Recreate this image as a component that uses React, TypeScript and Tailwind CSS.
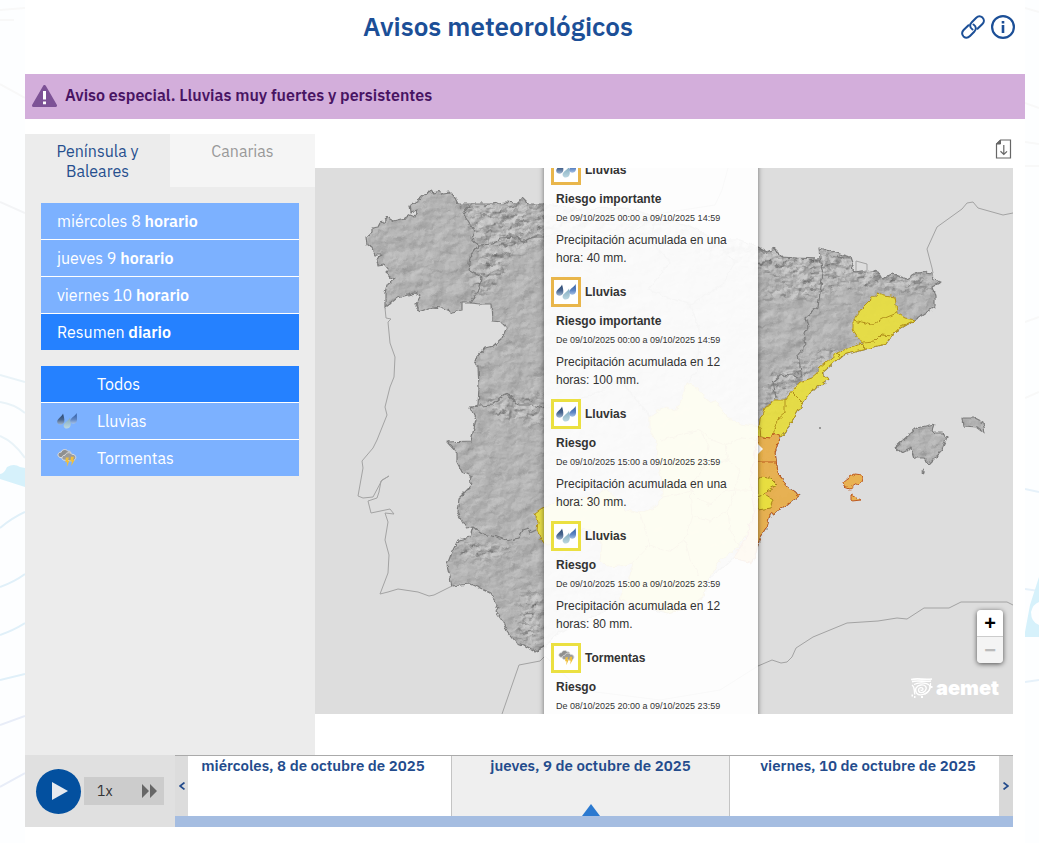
import React, { useState } from "react";
import clsx from "clsx";

const periods = [
  { label: "miércoles 8", kind: "horario" },
  { label: "jueves 9", kind: "horario" },
  { label: "viernes 10", kind: "horario" },
  { label: "Resumen", kind: "diario" },
];

const phenomena = ["Todos", "Lluvias", "Tormentas"];

const days = [
  "miércoles, 8 de octubre de 2025",
  "jueves, 9 de octubre de 2025",
  "viernes, 10 de octubre de 2025",
];

const warnings = [
  { type: "Lluvias", level: "Riesgo importante", dates: "De 09/10/2025 00:00 a 09/10/2025 14:59", text: "Precipitación acumulada en una hora: 40 mm." },
  { type: "Lluvias", level: "Riesgo importante", dates: "De 09/10/2025 00:00 a 09/10/2025 14:59", text: "Precipitación acumulada en 12 horas: 100 mm." },
  { type: "Lluvias", level: "Riesgo", dates: "De 09/10/2025 15:00 a 09/10/2025 23:59", text: "Precipitación acumulada en una hora: 30 mm." },
  { type: "Lluvias", level: "Riesgo", dates: "De 09/10/2025 15:00 a 09/10/2025 23:59", text: "Precipitación acumulada en 12 horas: 80 mm." },
  { type: "Tormentas", level: "Riesgo", dates: "De 08/10/2025 20:00 a 09/10/2025 23:59", text: "" },
];

function RainIcon({ className }: { className?: string }) {
  return (
    <svg viewBox="0 0 20 16" className={className} aria-hidden="true">
      <defs>
        <linearGradient id="dropDark" x1="0" y1="0" x2="0" y2="1">
          <stop offset="0" stopColor="#27456f" />
          <stop offset=".55" stopColor="#4a6790" />
          <stop offset="1" stopColor="#9fb5cf" />
        </linearGradient>
        <linearGradient id="dropPale" x1="0" y1="0" x2="0" y2="1">
          <stop offset="0" stopColor="#7fa9bd" />
          <stop offset="1" stopColor="#bcd8e2" />
        </linearGradient>
        <linearGradient id="dropBlue" x1="0" y1="0" x2="0" y2="1">
          <stop offset="0" stopColor="#2b58a0" />
          <stop offset=".6" stopColor="#5f86c4" />
          <stop offset="1" stopColor="#a4c0e6" />
        </linearGradient>
      </defs>
      <path d="M6 .5 C7 4 7.500 6 7.300 8.300 C7 12.500 .6 12.800 .2 9 C0 5.500 4.800 4 6 .5Z" fill="url(#dropDark)" />
      <path d="M13 4.500 C13.600 8 14 10 13.700 12 C13.200 16.500 6.800 16.800 6.600 12.800 C6.600 9.500 11.500 8 13 4.500Z" fill="url(#dropPale)" />
      <path d="M19.600 0 C20 4 20.200 5.500 19.900 7.500 C19.400 11.500 13.400 11.800 13.200 8 C13.200 4.800 18 3.500 19.600 0Z" fill="url(#dropBlue)" />
    </svg>
  );
}

function StormIcon({ className }: { className?: string }) {
  return (
    <svg viewBox="0 0 20 18" className={className} aria-hidden="true">
      <path d="M3 8.500 C-.5 7 1 2.800 4.200 3.200 C5 0 9.500 -.3 10.800 2.200 C13 1.600 14 3 13.800 4.500 L12 9 Z" fill="#8f8f8f" stroke="#dedede" />
      <path d="M6 11 C3.800 9.400 5.300 6 7.900 6.300 C9 3 13.600 3 14.800 5.300 C18 5 19.800 8 18.200 10.300 C17 12.300 14 11.800 12.500 11.800 Z" fill="#9c9c9c" stroke="#dedede" />
      <path d="M8.800 8.500 H11.800 L11 11.800 H12.400 L9.800 18 L10 13.300 H8.400Z" fill="#f0c03c" />
      <path d="M14 7.800 H16.900 L16.200 11 H17.600 L14.300 17 L14.900 12.500 H13.300Z" fill="#f0c03c" />
    </svg>
  );
}

const PENINSULA =
  "M544 204 L528 204 522 198 518 203 505 202 492 204 458 204 455 198 450 193 443 194 438 191 433 193 431 191 425 195 418 200 410 205 411 212 417 210 415 217 410 215 405 218 393 221 387 217 384 222 380 223 378 227 372 228 372 232 366 237 367 245 372 248 375 255 382 255 377 260 378 266 384 265 388 270 385 273 390 277 395 279 387 285 385 293 385 308 397 298 415 293 421 296 416 305 419 312 432 307 443 308 452 312 462 310 462 303 470 303 480 304 491 304 492 321 502 322 507 327 502 338 493 346 485 348 474 360 478 367 479 387 478 405 470 408 476 420 471 441 447 442 457 453 457 462 462 472 472 477 470 487 459 498 457 513 466 528 473 527 470 537 458 540 452 552 447 565 450 577 452 586 470 584 490 593 499 608 496 612 503 622 507 632 515 642 523 645 535 652 544 647 560 632 590 618 620 604 645 608 667 613 690 608 703 597 707 580 723 567 733 558 753 563 759 540 767 527 770 515 785 507 800 495 788 487 778 473 775 452 780 437 790 425 803 403 812 390 818 387 829 379 822 373 843 355 886 344 893 333 915 320 935 307 935 297 932 287 941 282 933 280 932 273 925 272 917 273 907 279 893 274 882 279 878 272 867 270 855 272 850 257 833 252 819 248 820 259 797 258 783 257 775 249 767 252 758 247 740 240 715 240 690 226 650 215 627 208 585 209Z";

const BALEARES =
  "M895 447 L917 428 934 424 932 430 935 433 942 433 947 437 945 442 940 453 929 464 923 458 915 458 912 448 902 453Z M962 418 L975 418 983 422 985 433 977 427 963 426Z M922 472 L924 469 924 473Z";

// mountain ranges, drawn over the base relief with more contrast
const RANGES =
  "M455 200 L550 200 750 235 850 252 935 275 930 295 880 292 830 285 760 275 650 235 545 240 515 258 485 300 470 290 480 245 Z M478 400 L545 390 545 425 500 420 Z M525 590 L545 585 545 655 512 640 Z M758 290 L800 280 845 290 820 300 758 300Z M770 375 L830 345 850 350 815 375 775 420 758 420 Z M458 538 L520 545 500 560 455 560 Z";

const BORDERS = [
  "M470 205 L463 213 472 227 475 232 472 238 479 246 470 257 468 270 482 278 480 288 470 303",
  "M478 245 L493 244 500 238 517 237 523 242 532 237 543 237 570 232 600 240 640 228 655 214",
  "M470 407 L492 405 507 393 518 405 532 405 543 408 590 396 620 380 650 417",
  "M473 527 L483 534 497 537 508 541 518 538 522 530 528 528 530 533 536 530",
  "M820 259 L823 273 818 307 805 318 808 327 804 333 806 345 798 355 802 377 781 375 773 382 776 398",
  "M655 214 L650 240 670 262 648 290 690 305 722 285 735 262 715 240",
  "M690 305 L700 330 697 370 687 383",
];

const YELLOW_AREAS = [
  "M878 293 L884 295 895 297 897 313 905 318 915 320 893 333 886 344 866 349 862 343 853 330 853 320 862 308 870 300Z",
  "M758 435 L760 420 765 408 775 400 785 400 793 390 800 382 812 378 818 373 820 367 837 353 860 343 866 349 843 355 822 373 829 379 818 387 812 390 803 403 790 425 780 437 774 434 769 438Z",
  "M687 383 L694 386 703 393 708 402 715 400 722 410 727 417 740 424 760 427 764 480 760 510 748 530 738 548 720 560 707 580 703 597 690 608 667 613 655 608 640 607 620 600 623 590 630 575 633 563 620 566 607 567 600 560 602 545 593 530 580 528 565 540 548 545 542 542 537 530 538 522 535 513 543 507 558 502 573 500 590 498 607 490 618 500 626 510 640 513 654 508 662 497 662 480 657 463 658 445 650 430 650 417 658 411 667 407 676 412 682 398Z",
];

const YELLOW_LINES =
  "M853 320 L862 322 872 325 885 318 897 313 M863 343 L874 342 882 334 893 335 900 327 915 320 M785 400 L785 413 777 420 773 435 M793 393 L803 403 M837 353 L841 357 M660 440 L678 436 700 430 712 440 725 445 742 438 760 440 M662 497 L676 495 690 490 700 500 710 505 722 492 735 490 750 490 762 495 M640 513 L645 530 650 545 633 563 M690 490 L692 515 685 540 690 560 700 575 M735 490 L728 510 730 530 745 555 M700 430 L708 445 705 465 690 490 M725 445 L728 460 740 470 735 490 M650 545 L668 552 685 540 M692 515 L710 522 728 510 M705 465 L728 460";

const ORANGE_AREAS = [
  "M758 436 L769 438 774 434 780 437 775 452 778 473 788 487 800 495 785 507 770 515 767 527 759 540 753 563 733 558 745 540 755 510 750 480Z",
  "M855 474 L863 475 861 482 850 489 844 487 843 482 849 477Z",
  "M852 495 L861 500 852 501Z",
];

const COUNTRY_LINES = [
  "M385 308 L386 318 391 319 388 322 390 343 395 357 394 377 390 387 385 407 387 415 377 440 373 448 362 461 363 468 358 496 363 498 373 497 382 480 389 476 381 481 379 492 377 498 368 501 371 513 390 509 394 514 385 513 388 522 385 540 389 555 388 573 380 594 388 592 398 589 418 592 429 596 434 595 452 586",
  "M502 714 L519 665 540 661 545 656 580 690 660 700 720 690 758 666 772 660 781 663 787 662 792 657 796 648 813 637 847 623 878 621 897 618 907 619 924 608 949 608 961 602 1007 602 1013 605",
  "M933 273 L932 268 927 249 937 227 962 209 967 203 973 202 978 208 1003 215 1013 213",
  "M650 215 L715 205 722 190 728 168",
  "M856 272 L856 261 867 264 867 270",
];

function WarningMap() {
  return (
    <svg
      viewBox="315 168 698 546"
      preserveAspectRatio="xMidYMid slice"
      className="block h-full w-full"
      role="img"
      aria-label="Mapa de avisos"
    >
      <defs>
        {/* shaded terrain */}
        <filter id="relief" x="0" y="0" width="1" height="1" colorInterpolationFilters="sRGB">
          <feTurbulence type="fractalNoise" baseFrequency="0.05 0.07" numOctaves={4} seed={7} result="noise" />
          <feDiffuseLighting in="noise" surfaceScale={1.2} diffuseConstant={0.81} lightingColor="#ffffff" result="light">
            <feDistantLight azimuth={225} elevation={60} />
          </feDiffuseLighting>
          <feComposite in="light" in2="SourceGraphic" operator="in" />
        </filter>
        <filter id="ranges" x="0" y="0" width="1" height="1" colorInterpolationFilters="sRGB">
          <feTurbulence type="fractalNoise" baseFrequency="0.09 0.14" numOctaves={3} seed={11} result="noise" />
          <feDiffuseLighting in="noise" surfaceScale={2.2} diffuseConstant={0.82} lightingColor="#ffffff" result="light">
            <feDistantLight azimuth={225} elevation={60} />
          </feDiffuseLighting>
          <feGaussianBlur in="SourceAlpha" stdDeviation="6" result="mask" />
          <feComposite in="light" in2="mask" operator="in" />
        </filter>
        <clipPath id="land">
          <path d={PENINSULA} />
        </clipPath>
        {/* rough coastline */}
        <filter id="coast" x="-5%" y="-5%" width="110%" height="110%">
          <feTurbulence type="fractalNoise" baseFrequency="0.18" numOctaves={2} seed={3} result="n" />
          <feDisplacementMap in="SourceGraphic" in2="n" scale={5} xChannelSelector="R" yChannelSelector="G" />
        </filter>
      </defs>

      <rect x="315" y="168" width="698" height="546" fill="#dddddd" />
      <g fill="none" stroke="#a3a3a3" strokeLinejoin="round">
        {COUNTRY_LINES.map((d) => (
          <path key={d} d={d} />
        ))}
      </g>

      <g filter="url(#coast)" strokeLinejoin="round">
        <g filter="url(#relief)">
          <path d={PENINSULA} />
          <path d={BALEARES} />
        </g>
        <g clipPath="url(#land)">
          <path d={RANGES} filter="url(#ranges)" />
        </g>
        <g fill="none" stroke="#7c7c7c" strokeWidth="1.2">
          <path d={PENINSULA} />
          <path d={BALEARES} />
          {BORDERS.map((d) => (
            <path key={d} d={d} />
          ))}
        </g>
        <g fill="#e8de40" fillOpacity="0.94" stroke="#b3921c">
          {YELLOW_AREAS.map((d) => (
            <path key={d} d={d} />
          ))}
          <path d={YELLOW_LINES} fill="none" />
        </g>
        <g fill="#e9b04c" fillOpacity="0.95" stroke="#bd5a20">
          {ORANGE_AREAS.map((d) => (
            <path key={d} d={d} />
          ))}
          <path d="M758 462 L777 462" />
        </g>
        <path
          d="M758 477 L770 478 777 485 763 493 773 500 770 508 758 510Z M758 497 L764 495"
          fill="#e8de40"
          stroke="#a8851c"
        />
      </g>
      <circle cx="820" cy="428" r="1" fill="#808080" />
      <circle cx="767" cy="529" r="1" fill="#a0a0a0" />
      <path d="M757 443 L763 449 757 455Z" fill="#ffffff" />
    </svg>
  );
}

function AemetLogo() {
  return (
    <div className="pointer-events-none absolute right-[14px] bottom-4 flex items-center gap-[3px] text-white">
      <svg viewBox="0 0 22 20" className="h-5 w-[22px]" fill="none" stroke="currentColor" strokeWidth="1.300" aria-hidden="true">
        <path d="M0 1.500 C7 0 13 2 21 1 M1 3.600 C6 2 14 4 20 3" strokeWidth="1.700" />
        <path d="M3 6.500 C8 3.800 19 4.500 19 9 C19 15 9 19.500 5.500 15 C3 11.500 5.500 7.500 10 7 C15 6.500 16.500 10 14 13 C11.500 15.600 7.500 15 7.500 12 C7.500 9.500 11.500 8.800 12 11 C12 12.500 10 12.800 9.800 11.600" />
        <path d="M1 7 C4.500 9 2.500 13 4 16.500 M13.500 16.500 C17.500 14.500 20 11 19.500 5" />
        <path d="M.5 17.500 h1.500 M3 19 h1.500 M10 19 h2 M20 9 h1.500" strokeWidth="1.800" />
      </svg>
      <span className="font-['Inter'] text-xl leading-5 font-black">aemet</span>
    </div>
  );
}

function WarningPopup() {
  return (
    <div className="absolute -top-[13px] left-[229px] w-[214px] bg-white/93 pr-2 pl-[7px] font-['Liberation_Sans',sans-serif] text-xs text-[#333] shadow-[0_1px_5px_rgba(0,0,0,0.5)]">
      {warnings.map((item, i) => (
        <section key={i} className="h-[122px]">
          <h3 className="flex items-center gap-1 font-bold">
            <span
              className={clsx(
                "flex size-[30px] items-center justify-center border-[3px] bg-white",
                item.level === "Riesgo" ? "border-[#ebe041]" : "border-[#e9b64b]"
              )}
            >
              {item.type === "Lluvias" ? <RainIcon className="w-5" /> : <StormIcon className="w-[17px]" />}
            </span>
            {item.type}
          </h3>
          <div className="pl-[5px] leading-[18px]">
            <p className="mt-[5px] font-bold">{item.level}</p>
            <p className="mt-px text-[9px]">{item.dates}</p>
            <p className="mt-1">{item.text}</p>
          </div>
        </section>
      ))}
    </div>
  );
}

function Backdrop() {
  return (
    <>
      <svg viewBox="0 0 25 843" className="absolute top-0 left-0 h-[843px] w-[25px]" fill="none" aria-hidden="true">
        <rect width="25" height="843" fill="#fdfeff" />
        <path d="M0 10 L25 8 M0 20 H14 M0 84 L25 98" stroke="#f8f8f8" strokeWidth="2" />
        <path d="M0 202 L25 213" stroke="#f3f4f6" strokeWidth="2" />
        <path d="M0 375 L25 382 M0 402 Q14 404 25 413 M0 436 Q14 442 25 458" stroke="#e9f3f8" strokeWidth="2" />
        <path d="M0 474 Q4 474 7 467 Q14 463 20 467 L25 468 V487 L0 479Z" fill="#d6f1fb" />
        <path d="M0 528 Q12 518 25 512 M0 587 Q14 582 25 574 M0 635 Q14 630 25 623 M0 680 L25 674" stroke="#e0f0f9" strokeWidth="2" />
        <path d="M0 725 L25 716 M0 787 L25 773" stroke="#e8edf8" strokeWidth="2" />
      </svg>
      <svg viewBox="0 0 14 843" className="absolute top-0 right-0 h-[843px] w-[14px]" fill="none" aria-hidden="true">
        <rect width="14" height="843" fill="#fdfeff" />
        <path d="M0 8 L14 12 M0 103 L14 108 M0 142 L14 144 M0 166 H14 M0 322 L14 317 M0 398 L14 392" stroke="#f8f8f8" strokeWidth="2" />
        <path d="M0 489 L14 492 M0 589 L14 591 M0 682 L14 680" stroke="#e6f1fa" strokeWidth="2" />
        <path d="M14 577 L5 605 L0 632 V637 H14 V625 Q6 622 6 612 Q8 604 14 602Z" fill="#d6f1fb" />
      </svg>
    </>
  );
}

export default function App() {
  const [period, setPeriod] = useState(3);
  const [phenomenon, setPhenomenon] = useState("Todos");

  return (
    <div className="relative bg-white pr-[14px] pb-4 pl-[25px] font-['IBM_Plex_Sans','Noto_Sans',sans-serif]">
      <Backdrop />
      <div className="relative bg-white">
        {/* Cabecera */}
        <header className="flex h-[74px] items-start pt-[10px] pr-[10px] text-[#1c4f97]">
          <h1 className="flex-1 pl-[10px] text-center text-[26px] leading-8 font-semibold">Avisos meteorológicos</h1>
          <div className="flex items-center gap-[6px] pt-[5px]">
            <button type="button" aria-label="Enlace permanente" className="cursor-pointer">
              <svg viewBox="0 0 24 24" className="size-6" fill="none" stroke="currentColor" strokeWidth="2" strokeLinecap="round" aria-hidden="true">
                <path d="M11.500 14.500 C8.500 12.500 8.500 9.500 10.800 7.200 L15 3 C16.800 1.200 19.500 .8 21.500 2.600 C23.500 4.600 23.200 7.200 21.400 9 L16.500 13.800" />
                <path d="M12.500 9.500 C15.500 11.500 15.500 14.500 13.200 16.800 L9 21 C7.200 22.800 4.500 23.200 2.500 21.400 C.5 19.400 .8 16.800 2.600 15 L7.500 10.200" />
              </svg>
            </button>
            <button type="button" aria-label="Información" className="cursor-pointer">
              <svg viewBox="0 0 24 24" className="size-6" fill="none" stroke="currentColor" aria-hidden="true">
                <circle cx="12" cy="12" r="10.900" strokeWidth="2.200" />
                <path d="M12 6 v2.400 M12 10 v8" strokeWidth="2.600" />
              </svg>
            </button>
          </div>
        </header>

        {/* Aviso especial */}
        <div role="alert" className="mb-[15px] flex h-[45px] items-center gap-2 bg-[#d3aedb] pb-1 pl-[7px] text-base font-semibold text-[#481463]">
          <svg viewBox="0 0 25 22" className="mt-[3px] h-[22px] w-[25px]" aria-hidden="true">
            <path d="M12.500 1.500 L23.500 20.500 H1.500Z" fill="#7d5296" stroke="#7d5296" strokeWidth="3" strokeLinejoin="round" />
            <path d="M12.500 6 V14.500 M12.500 16.500 V19.300" stroke="#fff" strokeWidth="3" />
          </svg>
          Aviso especial. Lluvias muy fuertes y persistentes
        </div>

        <main className="flex">
          <aside className="w-[290px] shrink-0 bg-[#ececec] text-base">
            <div role="tablist" className="grid grid-cols-2">
              <button type="button" role="tab" aria-selected="true" className="flex h-[53px] cursor-pointer justify-center px-6 pt-[7px] leading-5 text-[#264f8e]">
                Península y Baleares
              </button>
              <button type="button" role="tab" aria-selected="false" className="flex h-[53px] cursor-pointer justify-center bg-[#f5f5f5] px-6 pt-[7px] leading-5 text-[#999]">
                Canarias
              </button>
            </div>

            <div className="mx-4 mt-4 flex flex-col gap-px bg-white text-white">
              {periods.map((item, i) => (
                <button
                  key={item.label}
                  type="button"
                  onClick={() => setPeriod(i)}
                  className={clsx("h-9 cursor-pointer px-4 text-left", period === i ? "bg-[#2581ff]" : "bg-[#7cb1ff]")}
                >
                  {item.label} <b className="font-semibold">{item.kind}</b>
                </button>
              ))}
            </div>

            <div className="mx-4 mt-4 flex flex-col gap-px bg-white text-white">
              {phenomena.map((name) => (
                <button
                  key={name}
                  type="button"
                  onClick={() => setPhenomenon(name)}
                  className={clsx(
                    "flex h-9 cursor-pointer items-center px-4 text-left",
                    phenomenon === name ? "bg-[#2581ff]" : "bg-[#7cb1ff]"
                  )}
                >
                  <span className="w-10">
                    {name === "Lluvias" && <RainIcon className="w-5" />}
                    {name === "Tormentas" && <StormIcon className="w-5" />}
                  </span>
                  {name}
                </button>
              ))}
            </div>
          </aside>

          {/* Mapa */}
          <section className="min-w-0 flex-1 pr-3 pb-[41px]">
            <div className="flex h-[34px] items-center justify-end pb-1">
              <button type="button" aria-label="Descargar" className="cursor-pointer">
                <svg viewBox="0 0 18 20" className="h-5 w-[18px]" fill="none" stroke="#666" aria-hidden="true">
                  <path d="M5.500 1 H15.500 V19 H1.500 V5Z" strokeWidth="1.200" />
                  <path d="M5.500 1 V5 H1.500Z" fill="#666" />
                  <path d="M8.800 6 V15.500 M5.500 12.300 L8.800 15.500 L12 12.300" strokeWidth="1.200" />
                </svg>
              </button>
            </div>
            <div className="relative h-[546px] overflow-hidden bg-[#ddd]">
              <WarningMap />
              <WarningPopup />
              <div className="absolute right-[10px] bottom-[51px] flex w-[26px] flex-col overflow-hidden rounded-sm font-['Liberation_Sans',sans-serif] text-xl leading-none font-bold shadow-[0_1px_5px_rgba(0,0,0,0.65)]">
                <button type="button" aria-label="Acercar" className="h-[27px] cursor-pointer border-b border-[#ccc] bg-white text-black">
                  +
                </button>
                <button type="button" aria-label="Alejar" className="h-[26px] bg-[#f4f4f4] text-[#bbb]">
                  −
                </button>
              </div>
              <AemetLogo />
            </div>
          </section>
        </main>

        {/* Línea de tiempo */}
        <footer className="flex h-[72px] pr-3">
          <div className="flex w-[150px] shrink-0 items-center gap-[3px] bg-[#e0e0e0] pl-[11px]">
            <button type="button" aria-label="Reproducir" className="flex size-[45px] cursor-pointer items-center justify-center rounded-full bg-[#03509f]">
              <svg viewBox="0 0 16 18" className="ml-[2px] h-[18px] w-4 fill-[#e6eaf0]" aria-hidden="true">
                <path d="M0 0 L16 9 L0 18Z" />
              </svg>
            </button>
            <button type="button" className="flex h-7 w-20 cursor-pointer items-center justify-between bg-[#ccc] pr-[7px] pl-[13px] text-sm text-[#333]">
              1x
              <svg viewBox="0 0 15 14" className="h-[14px] w-[15px] fill-[#666]" aria-hidden="true">
                <path d="M0 0 L7 7 L0 14Z M8 0 L15 7 L8 14Z" />
              </svg>
            </button>
          </div>
          <div className="relative flex min-w-0 flex-1 flex-col border-t border-[#aaa] text-[15px] leading-5 font-semibold text-[#234b8c]">
            <div className="grid flex-1 grid-cols-[277fr_278fr_277fr_6fr]">
              {days.map((day, i) => (
                <button
                  key={day}
                  type="button"
                  className={clsx(
                    "relative flex cursor-pointer justify-center border-r border-[#c4c4c4] whitespace-nowrap",
                    i === 1 ? "bg-[#efefef]" : "bg-white"
                  )}
                >
                  {day}
                  {i === 1 && (
                    <svg viewBox="0 0 18 12" className="absolute bottom-0 left-1/2 h-3 w-[18px] -translate-x-1/2 fill-[#2b79d0]" aria-hidden="true">
                      <path d="M9 0 L18 12 H0Z" />
                    </svg>
                  )}
                </button>
              ))}
              <span className="bg-[#ddd]" />
            </div>
            <div className="h-[11px] bg-[#a5bde1]" />
            <button type="button" aria-label="Anterior" className="absolute top-0 left-0 h-[60px] w-[13px] cursor-pointer bg-[#dcdcdc]">
              <svg viewBox="0 0 6 8" className="mx-auto h-2 w-[6px]" fill="none" stroke="currentColor" strokeWidth="1.800" aria-hidden="true">
                <path d="M5.500 .6 L1 4 L5.500 7.400" />
              </svg>
            </button>
            <button type="button" aria-label="Siguiente" className="absolute top-0 right-0 h-[60px] w-[14px] cursor-pointer bg-[#d8d8d8]">
              <svg viewBox="0 0 6 8" className="mx-auto h-2 w-[6px]" fill="none" stroke="currentColor" strokeWidth="1.800" aria-hidden="true">
                <path d="M.5 .6 L5 4 L.5 7.400" />
              </svg>
            </button>
          </div>
        </footer>
      </div>
    </div>
  );
}
